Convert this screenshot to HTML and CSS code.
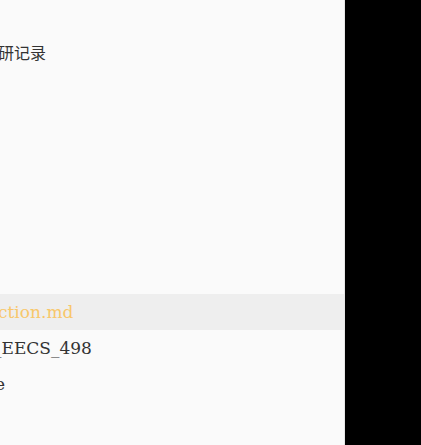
FILE: index.html
```html
<!DOCTYPE html>
<html>
<head>
<meta charset="utf-8">
<link rel="stylesheet" href="styles.css">
</head>
<body>
<div class="app">
  <aside class="sidebar">
    <div class="title"><span class="shift-title">科研记录</span></div>
    <div class="list">
      <div class="row active"><span class="shift-a">ction.md</span></div>
      <div class="row"><span class="shift-b">_EECS_498</span></div>
      <div class="row"><span class="shift-c">e</span></div>
    </div>
  </aside>
  <main class="main"></main>
</div>
</body>
</html>
```
FILE: styles.css
```css
html, body {
  margin: 0;
  padding: 0;
  height: 100%;
}
body {
  font-family: "DejaVu Serif", "Noto Sans CJK SC", serif;
  font-size: 17px;
  color: #333;
  overflow: hidden;
}
.app {
  display: flex;
  height: 445px;
}
.sidebar {
  width: 344px;
  flex: none;
  background: #fafafa;
  border-right: 1px solid #e6e6e6;
  overflow: hidden;
  display: flex;
  flex-direction: column;
}
.main {
  flex: 1;
  background: #000;
}
.title {
  height: 36px;
  margin-top: 34px;
  line-height: 36px;
  white-space: nowrap;
  font-size: 16px;
}
.shift-title {
  display: inline-block;
  margin-left: -18px;
  font-family: "Noto Sans CJK SC", sans-serif;
}
.list {
  margin-top: 224px;
}
.row {
  height: 36px;
  line-height: 36px;
  white-space: nowrap;
}
.row.active {
  background: #eeeeee;
  color: #f8c76a;
}
.shift-a { margin-left: -2px; display: inline-block; }
.shift-b { margin-left: -7px; display: inline-block; }
.shift-c { margin-left: -5px; display: inline-block; }
```
